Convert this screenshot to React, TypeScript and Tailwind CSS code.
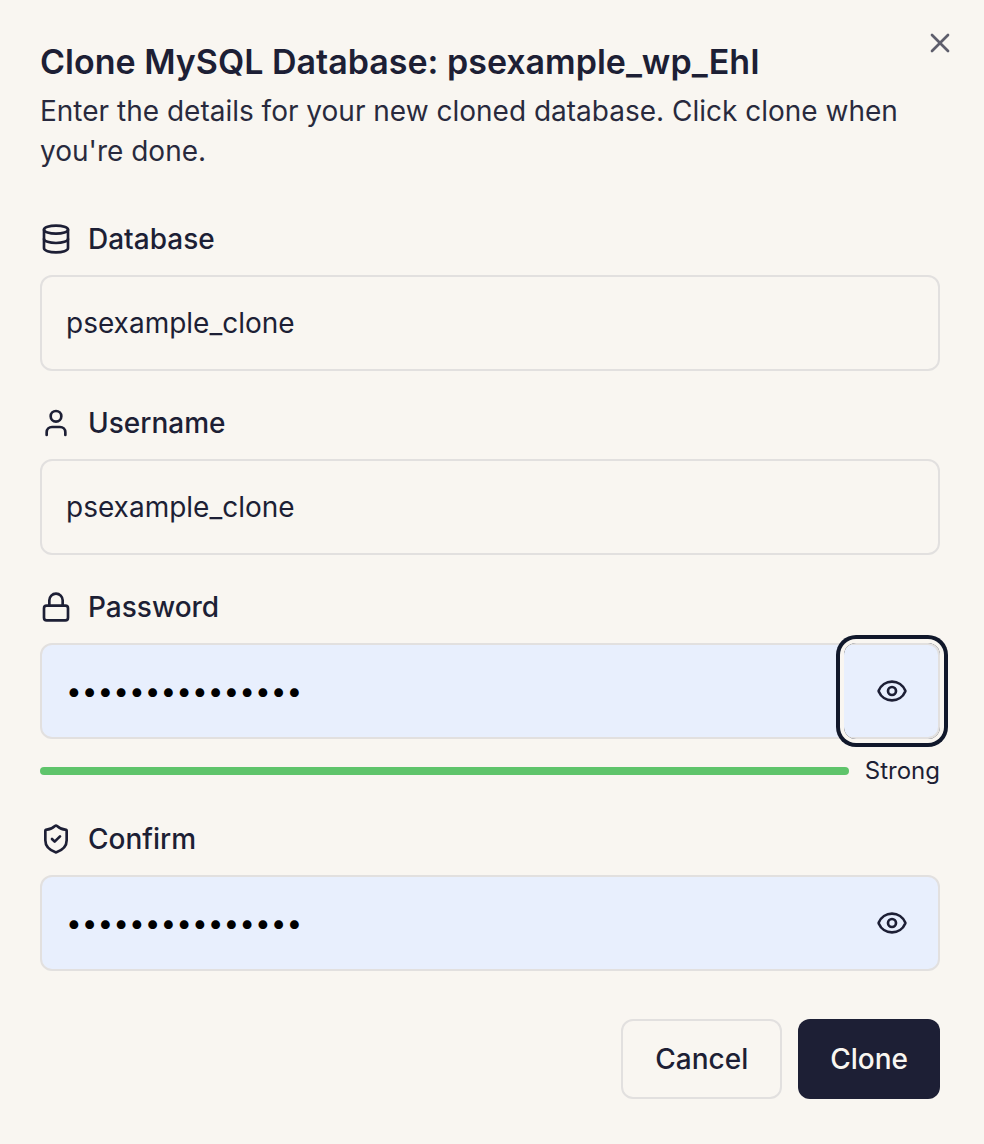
import { useState } from 'react';
import { Database, Eye, EyeOff, Lock, ShieldCheck, User, X } from 'lucide-react';
import type { LucideIcon } from 'lucide-react';
import clsx from 'clsx';

type FieldProps = {
  id: string;
  label: string;
  icon: LucideIcon;
  value: string;
  onChange: (value: string) => void;
};

function FieldLabel({ id, label, icon: Icon }: Pick<FieldProps, 'id' | 'label' | 'icon'>) {
  return (
    <label htmlFor={id} className="flex items-center gap-4 text-[28px] leading-10 font-medium">
      <Icon size={32} aria-hidden="true" />
      {label}
    </label>
  );
}

function TextField({ id, label, icon, value, onChange }: FieldProps) {
  return (
    <div className="flex flex-col gap-4">
      <FieldLabel id={id} label={label} icon={icon} />
      <input
        id={id}
        type="text"
        value={value}
        onChange={(e) => onChange(e.target.value)}
        className="h-24 w-full rounded-xl border-2 border-[#e2e0df] bg-transparent px-6 text-[28px] outline-none"
      />
    </div>
  );
}

function PasswordField({ id, label, icon, value, onChange, ring }: FieldProps & { ring?: boolean }) {
  const [visible, setVisible] = useState(false);

  return (
    <div className="flex flex-col gap-4">
      <FieldLabel id={id} label={label} icon={icon} />
      <div className="relative">
        <input
          id={id}
          type={visible ? 'text' : 'password'}
          value={value}
          onChange={(e) => onChange(e.target.value)}
          className="block h-24 w-full rounded-xl border-2 border-[#e2e0df] bg-[#e8effd] pr-24 pl-6 text-[28px] text-black outline-none"
        />
        <button
          type="button"
          aria-label={visible ? 'Hide password' : 'Show password'}
          onClick={() => setVisible(!visible)}
          className={clsx(
            'absolute top-0 right-0 flex size-24 items-center justify-center rounded-xl outline-none',
            ring && 'ring-4 ring-[#11182b] ring-offset-4 ring-offset-[#f9f6f1]',
          )}
        >
          {visible ? <EyeOff size={32} /> : <Eye size={32} />}
        </button>
      </div>
    </div>
  );
}

export default function App() {
  const [database, setDatabase] = useState('psexample_clone');
  const [username, setUsername] = useState('psexample_clone');
  const [password, setPassword] = useState('v7#Kq2!mZx9@LpT');
  const [confirm, setConfirm] = useState('v7#Kq2!mZx9@LpT');

  return (
    <div
      role="dialog"
      aria-labelledby="clone-title"
      className="relative min-h-screen bg-[#f9f6f1] pt-10 pr-11 pb-11 pl-10 font-['Inter',sans-serif] text-[#1d1f35]"
    >
      <button type="button" aria-label="Close" className="absolute top-[27px] right-7 opacity-70">
        <X size={32} />
      </button>

      <header className="mb-12 flex flex-col gap-2">
        <h2 id="clone-title" className="text-[34px] leading-[43px] font-semibold">
          Clone MySQL Database: psexample_wp_EhI
        </h2>
        <p className="text-[28px] leading-10 opacity-95">
          Enter the details for your new cloned database. Click clone when you're done.
        </p>
      </header>

      <form onSubmit={(e) => e.preventDefault()}>
        <div className="flex flex-col gap-8">
          <TextField id="database" label="Database" icon={Database} value={database} onChange={setDatabase} />
          <TextField id="username" label="Username" icon={User} value={username} onChange={setUsername} />
          <div className="flex flex-col gap-4">
            <PasswordField id="password" label="Password" icon={Lock} value={password} onChange={setPassword} ring />
            <div className="flex items-center gap-4">
              <div className="h-2 flex-1 rounded-full bg-[#5fc46b]" />
              <span className="text-2xl leading-8">Strong</span>
            </div>
          </div>
          <PasswordField id="confirm" label="Confirm" icon={ShieldCheck} value={confirm} onChange={setConfirm} />
        </div>

        <div className="mt-12 flex justify-end gap-4">
          <button
            type="button"
            className="h-20 rounded-xl border-2 border-[#e2e0df] px-8 text-[28px] font-medium"
          >
            Cancel
          </button>
          <button
            type="submit"
            className="h-20 rounded-xl bg-[#1d1f35] px-8 text-[28px] font-medium text-[#f9f6f1]"
          >
            Clone
          </button>
        </div>
      </form>
    </div>
  );
}
